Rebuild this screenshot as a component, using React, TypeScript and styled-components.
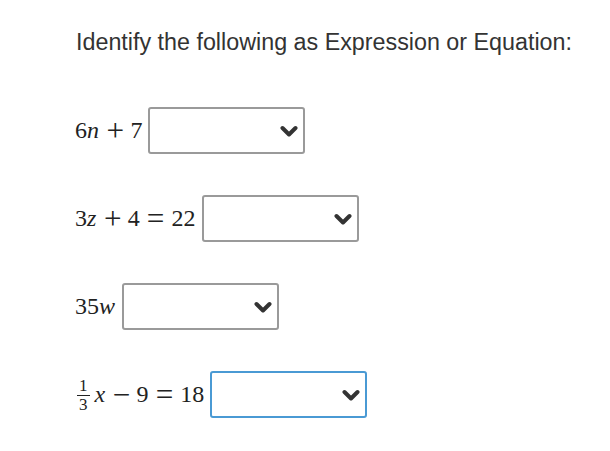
import * as React from 'react';
import styled, { createGlobalStyle } from 'styled-components';

const GlobalStyle = createGlobalStyle`
  body {
    margin: 0;
    background: #fff;
  }
`;

const Page = styled.div`
  padding: 28px 0 0 76px;
  font-family: 'Liberation Sans', Arial, sans-serif;
  color: #333;
`;

const Title = styled.h1`
  margin: 0;
  font-size: 23.3px;
  font-weight: normal;
  line-height: 28px;
`;

const List = styled.div`
  margin-top: 51px;
  margin-left: -1px;
  display: flex;
  flex-direction: column;
  gap: 41px;
`;

const Row = styled.div`
  display: flex;
  align-items: center;
  gap: 6px;
`;

const Math = styled.span`
  font-family: 'Liberation Serif', 'Times New Roman', serif;
  font-size: 24px;
  color: #222;
  display: inline-flex;
  align-items: center;
  white-space: nowrap;
`;

const Var = styled.i`
  font-style: italic;
  padding-right: 0.06em;
`;

const Op = styled.span<{ $rel?: boolean }>`
  display: inline-block;
  font-size: 1.3em;
  line-height: 1;
  font-weight: 300;
  width: 0.62em;
  text-align: center;
  margin: 0 ${({ $rel }) => ($rel ? '0.2em' : '0.17em')};
`;

const Frac = styled.span`
  display: inline-flex;
  flex-direction: column;
  align-items: center;
  font-size: 17px;
  line-height: 17px;
  margin: 0 5px 0 2px;

  span:first-child {
    border-bottom: 1px solid #222;
    padding: 0 2px 1px;
  }
`;

const Select = styled.div<{ $focused?: boolean }>`
  box-sizing: border-box;
  width: 157px;
  height: 47px;
  border: 2px solid ${({ $focused }) => ($focused ? '#4a9ad4' : '#9a9a9a')};
  border-radius: 3px;
  background: #fff;
  display: flex;
  align-items: center;
  justify-content: flex-end;
  padding-right: 5px;
`;

const Chevron = () => (
  <svg width={18} height={12} viewBox="0 0 18 12" fill="none">
    <path d="M2.5 3l6.5 6.5 6.5-6.5" stroke="#333" strokeWidth={4} strokeLinecap="round" strokeLinejoin="round" />
  </svg>
);

const Dropdown = ({ focused }: { focused?: boolean }) => (
  <Select $focused={focused}>
    <Chevron />
  </Select>
);

export default function App() {
  return (
    <Page>
      <GlobalStyle />
      <Title>Identify the following as Expression or Equation:</Title>
      <List>
        <Row>
          <Math>
            6<Var>n</Var>
            <Op>+</Op>7
          </Math>
          <Dropdown />
        </Row>
        <Row>
          <Math>
            3<Var>z</Var>
            <Op>+</Op>4<Op $rel>=</Op>22
          </Math>
          <Dropdown />
        </Row>
        <Row>
          <Math>
            35<Var>w</Var>
          </Math>
          <Dropdown />
        </Row>
        <Row>
          <Math>
            <Frac>
              <span>1</span>
              <span>3</span>
            </Frac>
            <Var>x</Var>
            <Op>−</Op>9<Op $rel>=</Op>18
          </Math>
          <Dropdown focused />
        </Row>
      </List>
    </Page>
  );
}
